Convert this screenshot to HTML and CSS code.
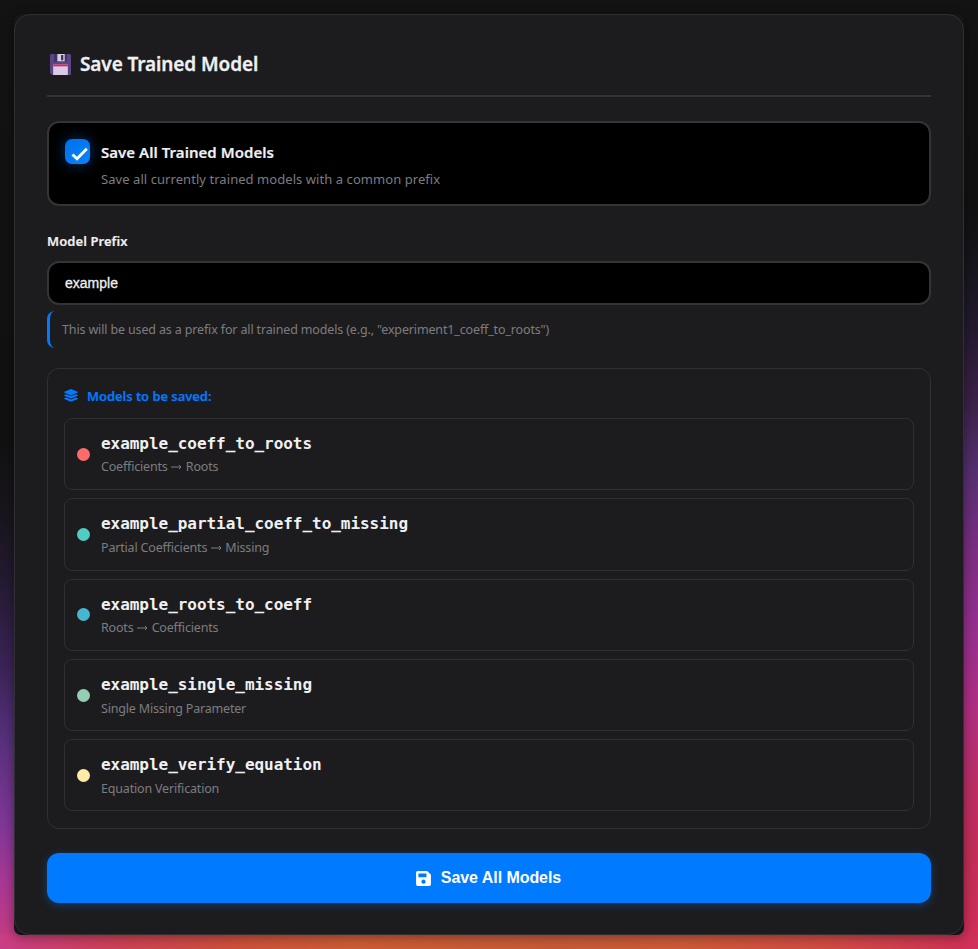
FILE: index.html
```html
<!DOCTYPE html>
<html lang="en">
<head>
<meta charset="utf-8">
<title>Save Trained Model</title>
<link rel="stylesheet" href="styles.css">
</head>
<body>
<div class="bottom-glow"></div>
<div class="right-glow"></div>
<div class="frame">
<main class="card">
  <header class="header">
    <svg class="floppy" viewBox="0 0 20 20" aria-hidden="true">
      <path d="M1 0h18l1 1v19H2l-2-2V1z" fill="#5b4587"/>
      <path d="M4 0h12v7.500H4z" fill="#3e3561"/>
      <path d="M7 0h7v7H7z" fill="#d8cfe2"/>
      <path d="M10.500 1h2.200v5h-2.200z" fill="#3e3561"/>
      <path d="M3 10h14v10H3z" fill="#d9cbe6"/>
      <path d="M3 10h14v1.800H3z" fill="#e0245e"/>
    </svg>
    <h1>Save Trained Model</h1>
  </header>
  <label class="option">
    <span class="check"><svg viewBox="0 0 24 24"><path d="M7.500 15.500l4.500 4.300 9.800-10" fill="none" stroke="#fff" stroke-width="2.900"/></svg></span>
    <span class="option-text">
      <strong>Save All Trained Models</strong>
      <span class="muted">Save all currently trained models with a common prefix</span>
    </span>
  </label>
  <div class="label">Model Prefix</div>
  <div class="input">example</div>
  <div class="hint">This will be used as a prefix for all trained models (e.g., "experiment1_coeff_to_roots")</div>
  <section class="models">
    <h2>
      <svg class="layers" viewBox="0 0 14 13" aria-hidden="true" fill="#007aff"><path d="M7 0l6.700 2.800q.5.400 0 .8L7 6.400.3 3.600q-.5-.4 0-.8z"/><path d="M.3 6l1.800-.8L7 7.300l4.900-2.100 1.800.8q.5.400 0 .8L7 9.600.3 6.800q-.5-.4 0-.8z"/><path d="M.3 9.200l1.800-.8L7 10.500l4.900-2.100 1.800.8q.5.400 0 .8L7 12.800.3 10q-.5-.4 0-.8z"/></svg>
      <span>Models to be saved:</span>
    </h2>
    <div class="item"><i class="dot red"></i><div><b>example_coeff_to_roots</b><span class="muted">Coefficients <svg class="arrow" viewBox="0 0 11 8"><path d="M0 4h10M8 2l2 2-2 2" fill="none" stroke="currentColor"/></svg> Roots</span></div></div>
    <div class="item"><i class="dot teal"></i><div><b>example_partial_coeff_to_missing</b><span class="muted">Partial Coefficients <svg class="arrow" viewBox="0 0 11 8"><path d="M0 4h10M8 2l2 2-2 2" fill="none" stroke="currentColor"/></svg> Missing</span></div></div>
    <div class="item"><i class="dot blue"></i><div><b>example_roots_to_coeff</b><span class="muted">Roots <svg class="arrow" viewBox="0 0 11 8"><path d="M0 4h10M8 2l2 2-2 2" fill="none" stroke="currentColor"/></svg> Coefficients</span></div></div>
    <div class="item"><i class="dot green"></i><div><b>example_single_missing</b><span class="muted">Single Missing Parameter</span></div></div>
    <div class="item"><i class="dot yellow"></i><div><b>example_verify_equation</b><span class="muted">Equation Verification</span></div></div>
  </section>
  <button class="save" type="button">
    <svg viewBox="0 0 16 16" aria-hidden="true"><path fill="#fff" fill-rule="evenodd" d="M2.500 1h9L15 4.500v9q0 1.500-1.500 1.500h-11Q1 15 1 13.500v-11Q1 1 2.500 1zM3.200 3.200v3.600h7.600V3.200zM8 9a2 2 0 1 0 .01 0z"/></svg>
    <span>Save All Models</span>
  </button>
</main>
</div>
</body>
</html>
```
FILE: styles.css
```css
* { box-sizing: border-box; }
body {
  margin: 0;
  padding: 14px;
  height: 949px;
  overflow: hidden;
  font-family: "Noto Sans", "Open Sans", sans-serif;
  color: #f0f0f2;
  background: linear-gradient(180deg, #131314 0, #111112 440px, #18151c 510px, #241a31 580px, #3c2458 670px, #55307a 735px, #7d3795 820px, #a83795 880px, #c93d80 949px);
}
.bottom-glow {
  position: absolute;
  left: 0; right: 0; top: 934px; height: 15px;
  background: linear-gradient(90deg, #c93d86 0, #cc4058 110px, #cc4f3c 230px, #cc5c36 350px, #c65a38 560px, #cc5a38 680px, #d04a44 830px, #cf2f58 978px);
}
.right-glow {
  position: absolute;
  right: 0; top: 0; width: 14px; height: 949px;
  background: linear-gradient(180deg, #131314 0, #111112 210px, #17161d 270px, #241a30 330px, #3b2148 400px, #553070 470px, #7c2e83 550px, #96308f 630px, #b22e82 710px, #bd2e63 790px, #c52d58 860px, #d2305a 949px);
}
.frame {
  position: relative;
  width: 950px;
  height: 921px;
  border-radius: 7px;
  background: #151518;
  box-shadow: 0 2px 12px rgba(0, 0, 0, .4);
}
.card {
  width: 950px;
  height: 921px;
  padding: 32px;
  border: 1px solid #303033;
  border-radius: 16px;
  background: #1c1c1e;
  display: flex;
  flex-direction: column;
}
h1, h2 { margin: 0; }
span, strong, b { white-space: nowrap; }
.muted { color: #7c7c80; }
.header {
  height: 50px;
  flex: none;
  display: flex;
  align-items: flex-start;
  gap: 9px;
  padding: 5px 0 0 3px;
  border-bottom: 2px solid #333335;
}
.floppy { width: 21px; height: 21px; margin-top: 2px; }
h1 { font-size: 19px; line-height: 24px; font-weight: 600; letter-spacing: -.1px; -webkit-text-stroke: .3px; }
.option {
  height: 85px;
  flex: none;
  margin-top: 24px;
  padding: 15px 16px;
  display: flex;
  gap: 11px;
  border: 2px solid #343436;
  border-radius: 12px;
  background: #000;
}
.check {
  width: 25px; height: 25px;
  margin-top: 1px;
  border-radius: 7px;
  background: linear-gradient(135deg, #006fe8, #0a84ff);
  box-shadow: 0 0 14px rgba(0, 122, 255, .4);
}
.check svg { display: block; width: 24px; height: 24px; }
.option-text { display: flex; flex-direction: column; padding-top: 3px; }
.option-text strong { font-size: 15px; line-height: 22px; font-weight: 600; letter-spacing: .04px; -webkit-text-stroke: .2px; }
.option-text .muted { font-size: 13px; line-height: 18px; margin-top: 7px; letter-spacing: .06px; }
.label { height: 20px; margin-top: 25px; font-size: 13px; line-height: 20px; font-weight: 600; letter-spacing: .08px; -webkit-text-stroke: .2px; }
.input {
  height: 44px;
  flex: none;
  margin-top: 10px;
  padding: 0 16px;
  border: 2px solid #343436;
  border-radius: 12px;
  background: #000;
  font: 14px/40px "Liberation Sans", sans-serif;
  -webkit-text-stroke: .3px #f0f0f2;
}
.hint {
  height: 37px;
  flex: none;
  margin-top: 6px;
  padding-left: 12px;
  border-left: 3px solid #007aff;
  border-radius: 8px;
  font-size: 12.500px;
  letter-spacing: -.145px;
  line-height: 38px;
  color: #7c7c80;
}
.models {
  height: 461px;
  flex: none;
  margin-top: 20px;
  padding: 16px;
  display: flex;
  flex-direction: column;
  gap: 8px;
  border: 1px solid #303032;
  border-radius: 12px;
}
h2 {
  height: 25px;
  display: flex;
  gap: 9px;
  font-size: 13px;
  line-height: 22px;
  font-weight: 600;
  letter-spacing: -.06px;
  -webkit-text-stroke: .2px;
  color: #007aff;
}
.layers { width: 14px; height: 13px; margin-top: 4px; }
.item {
  height: 72.300px;
  flex: none;
  padding: 0 12px;
  display: flex;
  align-items: center;
  gap: 11px;
  border: 1px solid #303032;
  border-radius: 8px;
}
.item > div { display: flex; flex-direction: column; }
.item b { font: 700 16px/24px "DejaVu Sans Mono", monospace; letter-spacing: -.04px; }
.item .muted { font-size: 12.500px; line-height: 18px; margin-top: 2px; letter-spacing: -.18px; }
.item:nth-of-type(2) .muted, .item:nth-of-type(n+4) .muted { margin: 3px 0 -1px; }
.dot { width: 13px; height: 13px; border-radius: 50%; }
.red { background: #ff6b6b; }
.teal { background: #4ecdc4; }
.blue { background: #45b7d1; }
.green { background: #96ceb4; }
.yellow { background: #ffeaa7; }
.arrow { width: 11px; height: 8px; margin: 0 .5px; }
.save {
  height: 50px;
  flex: none;
  margin-top: 24px;
  padding-right: 8px;
  display: flex;
  align-items: center;
  justify-content: center;
  gap: 9px;
  border: 0;
  border-radius: 12px;
  background: #007aff;
  box-shadow: 0 2px 8px rgba(0, 122, 255, .35);
  color: #fff;
  font: 700 16px "Liberation Sans", sans-serif;
  letter-spacing: -.06px;
}
.save svg { width: 17px; height: 17px; }
```
